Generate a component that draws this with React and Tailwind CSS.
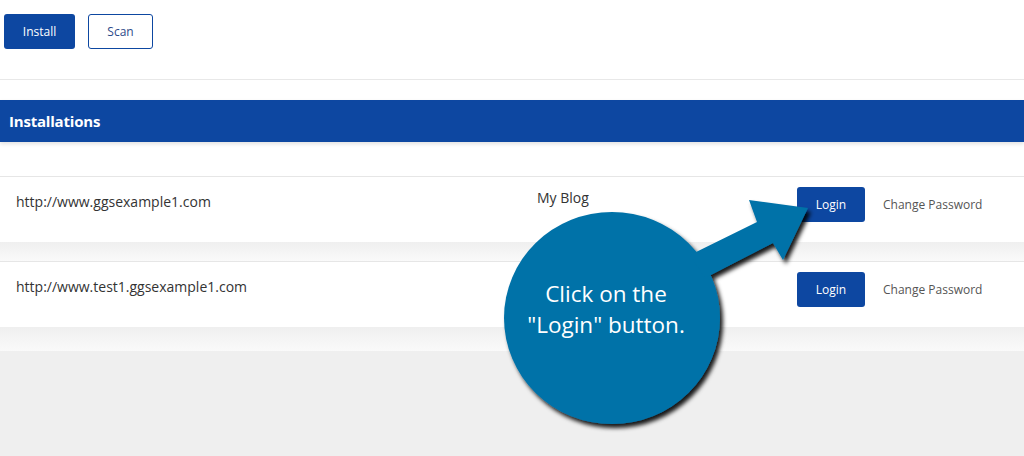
import React from 'react';

const rows = [
  { url: 'http://www.ggsexample1.com', title: 'My Blog' },
  { url: 'http://www.test1.ggsexample1.com', title: '' },
];

const Callout = () => (
  <div className="pointer-events-none absolute inset-0">
    <svg width="1024" height="456" viewBox="0 0 1024 456" className="absolute left-0 top-0">
      <defs>
        <filter id="callout-shadow" x="-20%" y="-20%" width="140%" height="140%">
          <feDropShadow dx="3" dy="4" stdDeviation="2.2" floodColor="#000" floodOpacity="0.9" />
        </filter>
      </defs>
      <g filter="url(#callout-shadow)" fill="#0072a8">
        <ellipse cx="612" cy="318" rx="108" ry="106" />
        <path d="M690 255 L757 222 L749 200 L808 208 L783 260 L773 243 L705 278 Z" />
      </g>
    </svg>
    <div className="absolute left-[506px] top-[278px] w-[200px] text-center text-[22.5px] leading-[31px] text-white">
      <div>Click on the</div>
      <div>"Login" button.</div>
    </div>
  </div>
);

const InstallRow = ({ url, title }) => (
  <div className="flex h-[66px] border-t border-[#e6e6e6] bg-white">
    <div className="w-[537px] pl-[16px] pt-[15px] text-[14px] leading-[20px] text-[#333]">{url}</div>
    <div className="w-[260px] pt-[11px] text-[14px] leading-[20px] text-[#333]">{title}</div>
    <div className="flex items-start gap-[18px] pt-[10px]">
      <button className="h-[35px] w-[68px] rounded-[3px] bg-[#0d47a1] text-[12px] text-white">Login</button>
      <span className="pt-[9px] text-[12px] leading-[17px] text-[#555]">Change Password</span>
    </div>
  </div>
);

export default function App() {
  return (
    <div className="relative h-[456px] w-[1024px] overflow-hidden bg-[#efefef] font-['Open_Sans',sans-serif]">
      <div className="bg-white">
        {/* toolbar */}
        <div className="flex h-[80px] gap-[13px] border-b border-[#e8e8e8] pl-[4px] pt-[14px]">
          <button className="h-[35px] w-[71px] rounded-[3px] bg-[#0d47a1] text-[12px] text-white">Install</button>
          <button className="h-[35px] w-[65px] rounded-[3px] border border-[#0d47a1] text-[12px] text-[#2d4a8a]">Scan</button>
        </div>

        <div className="h-[20px]" />

        <div className="flex h-[42px] items-center bg-[#0d47a1] pl-[9px] shadow-[0_2px_4px_rgba(0,0,0,0.12)]">
          <span className="text-[15px] font-bold tracking-[-0.2px] text-white">Installations</span>
        </div>

        <div className="h-[34px]" />

        {rows.map((r, i) => (
          <div key={i}>
            <InstallRow {...r} />
            <div className={`${i === 0 ? 'h-[19px]' : 'h-[24px]'} bg-gradient-to-b from-[#efefef] to-[#fafafa]`} />
          </div>
        ))}
      </div>

      <Callout />
    </div>
  );
}
